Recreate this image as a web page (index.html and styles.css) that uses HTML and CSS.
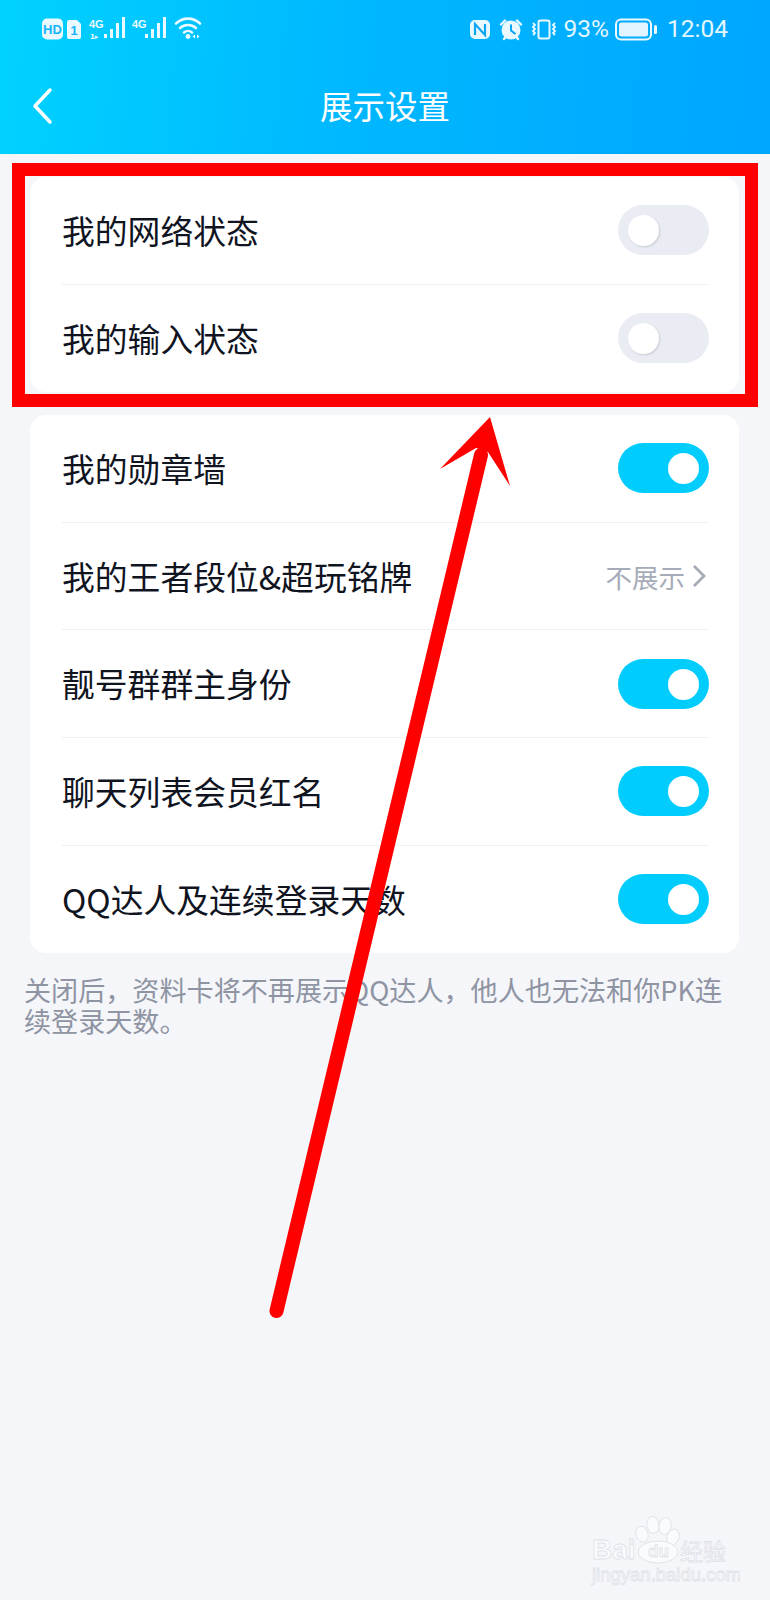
FILE: index.html
```html
<!DOCTYPE html>
<html lang="zh-CN">
<head>
    <meta charset="UTF-8">
    <meta name="viewport" content="width=device-width, initial-scale=1.0">
    <title>展示设置</title>
    <link rel="stylesheet" href="styles.css">
</head>
<body>
<div class="page">

    <!-- Header -->
    <header class="header">
        <div class="status-bar">
            <svg class="status-left" width="160" height="30" viewBox="0 0 160 30">
                <rect x="0" y="4.500" width="21" height="21" rx="5" fill="#eaf9ff"/>
                <text x="10.500" y="20" class="st-hd">HD</text>
                <path d="M27 6h8l4 4v13a2 2 0 0 1-2 2H27a2 2 0 0 1-2-2V8a2 2 0 0 1 2-2z" fill="#eaf9ff"/>
                <text x="32" y="21" class="st-hd">1</text>

                <text x="47" y="14" class="st-4g">4G</text>
                <text x="48" y="24.500" class="st-small">1▸</text>
                <g fill="#eaf9ff">
                    <rect x="62" y="20" width="3" height="4"/>
                    <rect x="68" y="15" width="3" height="9"/>
                    <rect x="74" y="9" width="3" height="15"/>
                    <rect x="80" y="3" width="3" height="21"/>
                </g>

                <text x="90" y="14" class="st-4g">4G</text>
                <g fill="#eaf9ff">
                    <rect x="103" y="20" width="3" height="4"/>
                    <rect x="109" y="15" width="3" height="9"/>
                    <rect x="115" y="9" width="3" height="15"/>
                    <rect x="121" y="3" width="3" height="21"/>
                </g>

                <g fill="none" stroke="#eaf9ff" stroke-width="2.600" stroke-linecap="round">
                    <path d="M134 9.500c7-6.500 17-6.500 24 0"/>
                    <path d="M138 14c4.500-4 11.500-4 16 0"/>
                    <path d="M142 18.500c2.300-2 5.700-2 8 0"/>
                </g>
                <circle cx="146" cy="22.500" r="2.400" fill="#eaf9ff"/>
                <path d="M153 20.500v4l-2.500-2zM155 20.500v4l2.500-2z" fill="#eaf9ff"/>
            </svg>
            <div class="status-right">
                <svg width="89" height="30" viewBox="0 0 89 30">
                    <rect x="1" y="6" width="20" height="19" rx="5" fill="#eaf9ff"/>
                    <path d="M6 21V10l10 11V10" fill="none" stroke="#0aa6f5" stroke-width="2.200"/>
                    <circle cx="42" cy="16" r="9.500" fill="#eaf9ff"/>
                    <path d="M42 10.500v6l4.500 3.500" fill="none" stroke="#0aa6f5" stroke-width="2"/>
                    <path d="M32 10.500l4-4M52 10.500l-4-4M35 25l2-2.500M49 25l-2-2.500" fill="none" stroke="#eaf9ff" stroke-width="2.400" stroke-linecap="round"/>
                    <rect x="69.500" y="6.500" width="11" height="18" rx="2" fill="none" stroke="#eaf9ff" stroke-width="2"/>
                    <path d="M64 9l2 2-2 2 2 2-2 2 2 2-2 2M86 9l-2 2 2 2-2 2 2 2-2 2 2 2" fill="none" stroke="#eaf9ff" stroke-width="1.800"/>
                </svg>
                <span class="status-text">93%</span>
                <svg width="43" height="30" viewBox="0 0 43 30">
                    <rect x="1" y="5.500" width="35" height="20" rx="5" fill="none" stroke="#eaf9ff" stroke-width="2"/>
                    <rect x="4" y="8.500" width="29" height="14" rx="2.500" fill="#e2f5ff"/>
                    <rect x="39" y="11" width="3" height="9" rx="1.500" fill="#eaf9ff"/>
                </svg>
                <span class="status-text status-time">12:04</span>
            </div>
        </div>
        <div class="navbar">
            <svg class="back" width="22" height="38" viewBox="0 0 22 38">
                <path d="M19 3L4 19l15 16" fill="none" stroke="#fff" stroke-width="3.500" stroke-linecap="round" stroke-linejoin="round"/>
            </svg>
            <h1 class="title">展示设置</h1>
        </div>
    </header>

    <main>
        <section class="card">
            <div class="row">
                <span class="label">我的网络状态</span>
                <span class="switch"></span>
            </div>
            <div class="row">
                <span class="label">我的输入状态</span>
                <span class="switch"></span>
            </div>
        </section>

        <section class="card">
            <div class="row">
                <span class="label">我的勋章墙</span>
                <span class="switch on"></span>
            </div>
            <div class="row">
                <span class="label">我的王者段位&amp;超玩铭牌</span>
                <span class="value">不展示
                    <svg width="14" height="24" viewBox="0 0 14 24">
                        <path d="M2 2l10 10L2 22" fill="none" stroke="#a6abb8" stroke-width="2.800"/>
                    </svg>
                </span>
            </div>
            <div class="row">
                <span class="label">靓号群群主身份</span>
                <span class="switch on"></span>
            </div>
            <div class="row">
                <span class="label">聊天列表会员红名</span>
                <span class="switch on"></span>
            </div>
            <div class="row">
                <span class="label">QQ达人及连续登录天数</span>
                <span class="switch on"></span>
            </div>
        </section>

        <p class="note">关闭后，资料卡将不再展示QQ达人，他人也无法和你PK连续登录天数。</p>
    </main>

    <!-- Annotation drawn on top of the screenshot -->
    <div class="highlight"></div>
    <svg class="arrow" width="770" height="1600" viewBox="0 0 770 1600">
        <line x1="276.500" y1="1311" x2="481" y2="455" stroke="#ff0000" stroke-width="14" stroke-linecap="round"/>
        <polygon points="490,417 510,486 488,452 476,448 440,469" fill="#ff0000"/>
    </svg>

    <!-- Watermark -->
    <svg class="watermark" width="150" height="80" viewBox="0 0 150 80">
        <g class="paw">
            <ellipse cx="52" cy="24" rx="6" ry="8" transform="rotate(-20 52 24)"/>
            <ellipse cx="63" cy="15" rx="6" ry="8.500" transform="rotate(-8 63 15)"/>
            <ellipse cx="75" cy="16" rx="6" ry="8.500" transform="rotate(10 75 16)"/>
            <ellipse cx="83" cy="27" rx="6" ry="8" transform="rotate(22 83 27)"/>
            <ellipse cx="68" cy="42" rx="20" ry="11"/>
        </g>
        <text x="2" y="48.500" class="wm-bai">Bai</text>
        <text x="58" y="47" class="wm-du">du</text>
        <text x="90" y="50" class="wm-cn">经验</text>
        <text x="2" y="71" class="wm-url">jingyan.baidu.com</text>
    </svg>

</div>
</body>
</html>
```

FILE: styles.css
```css
/* General Styles */
body {
    margin: 0;
    padding: 0;
    background-color: #f5f6fa;
    font-family: "Noto Sans CJK SC", "Noto Sans", sans-serif;
}

.page {
    position: relative;
    width: 770px;
    min-height: 1600px;
    overflow: hidden;
}

/* Header */
.header {
    height: 154px;
    background: linear-gradient(95deg, #00d2ff 0%, #00b8ff 45%, #00a6ff 100%);
    color: #fff;
}

.status-bar {
    display: flex;
    align-items: center;
    justify-content: space-between;
    height: 30px;
    padding: 14px 42px 0;
}

.status-left {
    display: block;
}

.status-right {
    display: flex;
    align-items: center;
    gap: 6px;
}

.status-text {
    font-family: Roboto, sans-serif;
    font-size: 24.500px;
    color: #e4f6ff;
    line-height: 30px;
}

.status-time {
    margin-left: 3px;
}

.st-hd {
    font-family: "Liberation Sans", sans-serif;
    font-size: 13px;
    font-weight: bold;
    fill: #18b4fa;
    text-anchor: middle;
}

.st-4g {
    font-family: "Liberation Sans", sans-serif;
    font-size: 11px;
    font-weight: bold;
    fill: #eaf9ff;
}

.st-small {
    font-family: "DejaVu Sans", sans-serif;
    font-size: 7px;
    font-weight: bold;
    fill: #eaf9ff;
}

.navbar {
    display: flex;
    align-items: center;
    justify-content: center;
    position: relative;
    height: 48px;
    margin-top: 37px;
}

.back {
    position: absolute;
    left: 31px;
    top: 6px;
}

.title {
    margin: 0;
    font-size: 32.500px;
    font-weight: 400;
    line-height: 48px;
}

/* Cards */
main {
    padding-top: 23px;
}

.card {
    margin: 0 31px 23px 30px;
    padding: 0 30px 0 32px;
    background-color: #fff;
    border-radius: 16px;
}

.row {
    display: flex;
    align-items: center;
    justify-content: space-between;
    box-sizing: border-box;
    height: 107.600px;
    border-bottom: 1px solid #f0f1f5;
}

.row:last-child {
    border-bottom: none;
}

.label {
    margin-bottom: 2px;
    font-size: 32.800px;
    color: #10141f;
}

.value {
    display: flex;
    align-items: center;
    gap: 7px;
    margin-right: 3px;
    font-size: 26.500px;
    color: #a6abb8;
}

/* Switch */
.switch {
    position: relative;
    display: block;
    width: 91px;
    height: 50px;
    border-radius: 25px;
    background-color: #e9ecf3;
}

.switch::after {
    content: "";
    position: absolute;
    top: 10px;
    left: 10px;
    width: 31px;
    height: 31px;
    border-radius: 50%;
    background-color: #fff;
    box-shadow: 1px 1px 2px rgba(90, 95, 110, 0.22);
}

.switch.on {
    background-color: #00cdfd;
}

.switch.on::after {
    left: 50px;
    box-shadow: none;
}

.note {
    margin: -2px 0 0;
    padding: 0 24px;
    font-size: 27.100px;
    line-height: 31px;
    color: #8f94a3;
}

/* Annotation */
.highlight {
    position: absolute;
    left: 12px;
    top: 163px;
    box-sizing: border-box;
    width: 746px;
    height: 244px;
    border: 13.500px solid #ff0000;
}

.arrow {
    position: absolute;
    left: 0;
    top: 0;
}

/* Watermark */
.watermark {
    position: absolute;
    left: 590px;
    top: 1510px;
}

.paw {
    fill: #fafbfd;
    stroke: #e3e4e9;
    stroke-width: 1px;
}

.watermark text {
    fill: #fafbfd;
    stroke: #e0e1e7;
    stroke-width: 0.8px;
}

.wm-bai {
    font-family: "Liberation Sans", sans-serif;
    font-size: 28px;
    font-weight: bold;
}

.wm-du {
    font-family: "Liberation Sans", sans-serif;
    font-size: 17px;
    font-weight: bold;
}

.wm-cn {
    font-size: 23px;
}

.wm-url {
    font-family: "Liberation Sans", sans-serif;
    font-size: 18.500px;
}
```
